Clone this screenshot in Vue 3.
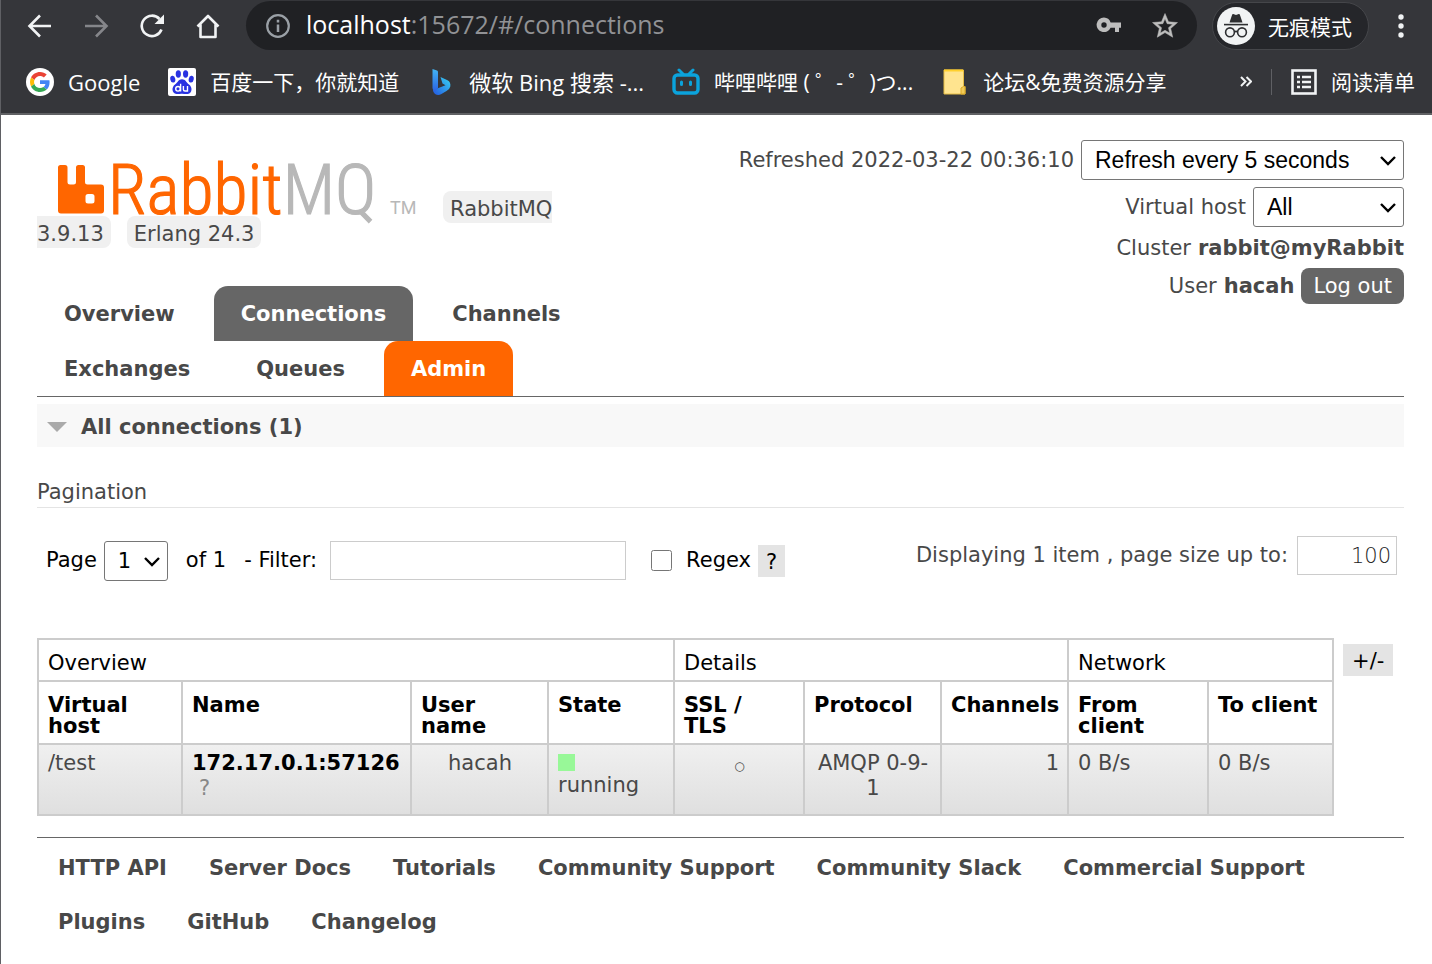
<script setup>
import { ref } from 'vue'

const refresh = ref('Refresh every 5 seconds')
const vhost = ref('All')
const page = ref('1')
const filter = ref('')
const regex = ref(false)
const pageSize = ref('100')

const tabs = [
  { name: 'Overview' },
  { name: 'Connections', state: 'selected' },
  { name: 'Channels' },
  { name: 'Exchanges' },
  { name: 'Queues' },
  { name: 'Admin', state: 'hot' }
]
const columns = [144, 229, 137, 126, 130, 137, 127, 140, 125]
const links = [
  'HTTP API', 'Server Docs', 'Tutorials', 'Community Support', 'Community Slack',
  'Commercial Support', 'Plugins', 'GitHub', 'Changelog'
]
</script>

<template>
  <div class="window">
    <div class="browser">
      <div class="toolbar">
        <button class="tool" aria-label="Back">
          <svg width="28" height="28" viewBox="0 0 28 28"><path d="M25 14H4M14 3.500L3.500 14L14 24.500" fill="none" stroke="#f1f3f4" stroke-width="2.600" /></svg>
        </button>
        <button class="tool" aria-label="Forward">
          <svg width="28" height="28" viewBox="0 0 28 28"><path d="M3 14H24M14 3.500L24.500 14L14 24.500" fill="none" stroke="#85868a" stroke-width="2.600" /></svg>
        </button>
        <button class="tool" aria-label="Reload">
          <svg width="28" height="28" viewBox="0 0 28 28"><path d="M23.500 17.500A10.200 10.200 0 1 1 21.500 7" fill="none" stroke="#f1f3f4" stroke-width="2.600" /><path d="M26 2.500V12H16.500Z" fill="#f1f3f4" /></svg>
        </button>
        <button class="tool" aria-label="Home">
          <svg width="28" height="28" viewBox="0 0 28 28"><path d="M3.500 14.500L14 4L24.500 14.500M6.500 12.500V25H21.500V12.500" fill="none" stroke="#f1f3f4" stroke-width="2.600" stroke-linejoin="round" /></svg>
        </button>
        <div class="omnibox">
          <svg width="26" height="26" viewBox="0 0 26 26"><circle cx="13" cy="13" r="10.800" fill="none" stroke="#9aa0a6" stroke-width="2.200" /><path d="M13 11.500V19M13 6.800V9.400" stroke="#9aa0a6" stroke-width="2.500" /></svg>
          <div class="url" role="textbox" aria-label="Address"><span class="host">localhost</span>:15672/#/connections</div>
          <svg class="key" width="26" height="26" viewBox="0 0 26 26"><path fill="#bdbdbd" fill-rule="evenodd" d="M8 4.500a7.300 7.300 0 1 0 6.600 10.200H19V19h4v-4.300h2V9.400H14.600A7.300 7.300 0 0 0 8 4.500ZM8 9.300a2.700 2.700 0 1 1 0 5.400a2.700 2.700 0 0 1 0-5.400Z" /></svg>
          <svg class="star" width="30" height="30" viewBox="0 0 24 24"><path fill="#bdbdbd" stroke="#bdbdbd" stroke-width=".4" d="M22 9.240l-7.190-.62L12 2 9.190 8.630 2 9.240l5.460 4.730L5.820 21 12 17.270 18.180 21l-1.630-7.030L22 9.240zM12 15.400l-3.760 2.270 1-4.280-3.320-2.880 4.380-.38L12 6.100l1.710 4.040 4.380.38-3.320 2.880 1 4.280L12 15.400z" /></svg>
        </div>
        <button class="incognito">
          <svg width="38" height="38" viewBox="0 0 38 38"><circle cx="19" cy="19" r="19" fill="#f1f3f4" /><path fill="#2d2e31" d="M12.500 15.500L15.200 7.600Q15.500 6.900 16.300 7.100L19 7.900L21.700 7.100Q22.500 6.900 22.800 7.600L25.500 15.500Z" /><path d="M7 17.600H31" stroke="#2d2e31" stroke-width="1.600" /><g fill="none" stroke="#2d2e31" stroke-width="1.600"><circle cx="13" cy="25.300" r="4.400" /><circle cx="25" cy="25.300" r="4.400" /><path d="M17.300 25Q19 23.600 20.700 25" /></g></svg>
          <span>无痕模式</span>
        </button>
        <button class="menu" aria-label="Menu">
          <svg width="8" height="26" viewBox="0 0 8 26"><g fill="#f1f3f4"><circle cx="4" cy="4" r="2.700" /><circle cx="4" cy="13" r="2.700" /><circle cx="4" cy="22" r="2.700" /></g></svg>
        </button>
      </div>
      <nav class="bookmarks" aria-label="Bookmarks">
        <a href="#" class="latin">
          <svg width="28" height="28" viewBox="0 0 28 28"><circle cx="14" cy="14" r="14" fill="#fff" /><g transform="translate(4 4) scale(.417)"><path fill="#ea4335" d="M24 9.500c3.540 0 6.710 1.220 9.210 3.600l6.850-6.850C35.900 2.380 30.470 0 24 0 14.620 0 6.510 5.380 2.560 13.220l7.980 6.190C12.430 13.720 17.740 9.500 24 9.500z" /><path fill="#4285f4" d="M46.980 24.550c0-1.570-.15-3.090-.38-4.550H24v9.020h12.940c-.58 2.960-2.260 5.480-4.780 7.180l7.730 6c4.510-4.180 7.090-10.360 7.090-17.650z" /><path fill="#fbbc05" d="M10.530 28.590c-.48-1.450-.76-2.990-.76-4.590s.27-3.140.76-4.590l-7.980-6.190C.92 16.460 0 20.120 0 24c0 3.880.92 7.540 2.560 10.780l7.970-6.190z" /><path fill="#34a853" d="M24 48c6.480 0 11.930-2.130 15.890-5.810l-7.730-6c-2.150 1.450-4.920 2.300-8.160 2.300-6.260 0-11.570-4.220-13.470-9.910l-7.980 6.190C6.510 42.620 14.620 48 24 48z" /></g></svg>
          Google
        </a>
        <a href="#">
          <svg width="28" height="28" viewBox="0 0 28 28"><rect width="28" height="28" rx="2" fill="#fff" /><g fill="#2932e1"><ellipse cx="10.300" cy="6" rx="2.600" ry="3.700" /><ellipse cx="17.600" cy="6" rx="2.600" ry="3.700" /><ellipse cx="4.800" cy="11.200" rx="2.500" ry="3.400" transform="rotate(-12 4.800 11.200)" /><ellipse cx="23.200" cy="11.200" rx="2.500" ry="3.400" transform="rotate(12 23.200 11.200)" /><path d="M14 11.300C10.500 11.300 9.800 14.500 7 16.500C3.500 19 3.400 25 8.500 26C11 26.400 12 25.700 14 25.700S17.500 26.400 19.800 26C24.600 25 24.500 19 21 16.500C18.200 14.500 17.500 11.300 14 11.300Z" /></g><g fill="none" stroke="#fff" stroke-width="1.400"><circle cx="10" cy="20.800" r="2.300" /><path d="M12.600 15.800V23.500M15.400 18V21.500Q15.400 23 17 23H19.500V18" /></g></svg>
          百度一下，你就知道
        </a>
        <a href="#" class="latin">
          <svg width="28" height="28" viewBox="0 0 28 28"><defs><linearGradient id="bingStem" x1="0" y1="0" x2="0" y2="1"><stop offset="0" stop-color="#42b5f5" /><stop offset="1" stop-color="#2b62e3" /></linearGradient><linearGradient id="bingBowl" x1="0" y1="1" x2="1" y2="0"><stop offset="0" stop-color="#2457e0" /><stop offset="1" stop-color="#38d4f2" /></linearGradient></defs><path fill="url(#bingBowl)" d="M13.500 9L20.500 12.300Q24 14.200 23.300 18.500Q22.800 21 19.500 23L14 26.300Q11 27.800 8 26Q6 24.800 6 22L11.500 20L18.500 17.200L15.500 15.500Z" /><path fill="url(#bingStem)" d="M5.500 1L10 2.600Q11 3 11 4.200V20L8.500 23.500Q5.500 22.500 5.500 19.500Z" /></svg>
          微软 Bing 搜索 -...
        </a>
        <a href="#">
          <svg width="28" height="28" viewBox="0 0 28 28"><g fill="none" stroke="#0ba3dc" stroke-linecap="round"><rect x="2" y="7" width="24" height="18" rx="3.500" stroke-width="3.400" /><path d="M7 2L11 6M21 2L17 6" stroke-width="3" /><path d="M9.500 14V16.500M18.500 14V16.500" stroke-width="3" /></g></svg>
          哔哩哔哩 ( ゜- ゜)つ...
        </a>
        <a href="#">
          <svg width="28" height="28" viewBox="0 0 28 28"><path d="M3 2H22.500V18.500H24V26H3Z" fill="#ffe48f" stroke="#e6bd45" /><path d="M3 2.500H22" stroke="#ffd02e" stroke-width="2" /><path d="M20 26V20L22.500 18.500H24V26Z" fill="#f2cb57" stroke="#dba926" /></svg>
          论坛&amp;免费资源分享
        </a>
        <button class="more" aria-label="More bookmarks">
          <svg width="12" height="12" viewBox="0 0 12 12"><path d="M1 1L5.500 5.500L1 10M6.500 1L11 5.500L6.500 10" fill="none" stroke="#f1f3f4" stroke-width="2" /></svg>
        </button>
        <button class="reading">
          <svg width="26" height="26" viewBox="0 0 26 26"><rect x="1.500" y="1.500" width="23" height="23" fill="none" stroke="#f1f3f4" stroke-width="2.600" /><path d="M6 8H9M6 13H9M6 18H9M11 8H20M11 13H20M11 18H20" stroke="#f1f3f4" stroke-width="2.600" /></svg>
          阅读清单
        </button>
      </nav>
    </div>

    <main class="page">
      <header class="top">
        <div class="brand">
          <div class="versions">
            <svg class="logo" width="385" height="56" viewBox="0 0 385 56" role="img" aria-label="RabbitMQ">
              <path fill="#f60" fill-rule="evenodd" d="M2.500 5H7Q9.500 5 9.500 7.500V22Q9.500 24.500 12 24.500H15.500Q18 24.500 18 22V7.500Q18 5 20.500 5H24.500Q27 5 27 7.500V22Q27 24.500 29.500 24.500H43Q46 24.500 46 27.500V50.500Q46 53.500 43 53.500H3Q0 53.500 0 50.500V7.500Q0 5 2.500 5ZM30 34Q27.500 34 27.500 36.500V41Q27.500 43.500 30 43.500H34Q36.500 43.500 36.500 41V36.500Q36.500 34 34 34Z" />
              <text class="word" x="50" y="54"><tspan class="rabbit">Rabbit</tspan><tspan class="mq">MQ</tspan></text>
              <text class="tm" x="332" y="54">TM</text>
            </svg>
            <span class="version">RabbitMQ 3.9.13</span>
            <span class="version erlang">Erlang 24.3</span>
          </div>
          <nav class="tabs">
            <a v-for="t in tabs" :key="t.name" href="#" :class="t.state">{{ t.name }}</a>
          </nav>
        </div>
        <div class="status">
          <div class="line">
            <label for="refresh">Refreshed 2022-03-22 00:36:10</label>
            <span class="drop wide">
              <select id="refresh" v-model="refresh"><option>Refresh every 5 seconds</option></select>
              <svg width="18" height="12" viewBox="0 0 18 12"><path d="M2 2L9 9L16 2" /></svg>
            </span>
          </div>
          <div class="line">
            <label for="vhost">Virtual host</label>
            <span class="drop mid">
              <select id="vhost" v-model="vhost"><option>All</option></select>
              <svg width="18" height="12" viewBox="0 0 18 12"><path d="M2 2L9 9L16 2" /></svg>
            </span>
          </div>
          <div class="line cluster">Cluster <b>rabbit@myRabbit</b></div>
          <div class="line">User <b>hacah</b> <button class="logout">Log out</button></div>
        </div>
      </header>

      <h2><svg width="20" height="12" viewBox="0 0 20 12"><path d="M0 0H20L10 10Z" fill="#aaa" /></svg>All connections (1)</h2>

      <h3>Pagination</h3>
      <div class="pager">
        <label for="page">Page</label>
        <span class="drop small">
          <select id="page" v-model="page"><option>1</option></select>
          <svg width="18" height="12" viewBox="0 0 18 12"><path d="M2 2L9 9L16 2" /></svg>
        </span>
        <span class="of">of 1</span>
        <label for="filter">- Filter:</label>
        <input id="filter" v-model="filter" class="filter" type="text">
        <input id="regex" v-model="regex" class="check" type="checkbox">
        <label for="regex">Regex</label>
        <button class="help">?</button>
        <div class="size">
          <label for="size">Displaying 1 item , page size up to:</label>
          <input id="size" v-model="pageSize" type="text">
        </div>
      </div>

      <div class="grid">
        <table>
          <colgroup><col v-for="(w, i) in columns" :key="i" :style="{ width: w + 'px' }"></colgroup>
          <thead>
            <tr class="groups">
              <th colspan="4">Overview</th>
              <th colspan="3">Details</th>
              <th colspan="2">Network</th>
            </tr>
            <tr>
              <th>Virtual host</th>
              <th>Name</th>
              <th>User name</th>
              <th>State</th>
              <th>SSL /<br>TLS</th>
              <th>Protocol</th>
              <th>Channels</th>
              <th>From client</th>
              <th>To client</th>
            </tr>
          </thead>
          <tbody>
            <tr>
              <td>/test</td>
              <td><a href="#" class="conn">172.17.0.1:57126</a><br><span class="hint">?</span></td>
              <td class="center">hacah</td>
              <td><span class="dot"></span><span class="state">running</span></td>
              <td class="center"><span class="circle">○</span></td>
              <td class="center">AMQP 0-9-<wbr>1</td>
              <td class="right">1</td>
              <td>0 B/s</td>
              <td>0 B/s</td>
            </tr>
          </tbody>
        </table>
        <button class="help">+/-</button>
      </div>

      <footer>
        <a v-for="l in links" :key="l" href="#">{{ l }}</a>
      </footer>
    </main>
  </div>
</template>

<style>
body {
  background: #fff;
}
</style>

<style scoped>
.window {
  box-sizing: border-box;
  min-height: 100vh;
  border-left: 1px solid #5f6064;
  background: #fff;
  color: #484848;
  font: 21px/25px "DejaVu Sans", sans-serif;
}
button {
  border: 0;
  padding: 0;
  background: none;
  color: inherit;
  font: inherit;
}
a {
  color: inherit;
  text-decoration: none;
}
svg {
  flex: none;
}

/* browser frame */
.browser {
  border-bottom: 2px solid #606164;
  background: #35363a;
  color: #fff;
  font-family: "Open Sans", "Noto Sans CJK SC", sans-serif;
}
.toolbar {
  display: flex;
  align-items: center;
  height: 51px;
  padding-left: 11px;
}
.tool {
  display: flex;
  justify-content: center;
  width: 56px;
}
.omnibox {
  display: flex;
  flex: 1;
  align-items: center;
  box-sizing: border-box;
  height: 49px;
  margin-left: 10px;
  padding: 0 17px 0 19px;
  border-radius: 25px;
  background: #202124;
}
.url {
  flex: 1;
  padding: 0 0 4px 15px;
  color: #919295;
  font-size: 25px;
  line-height: 34px;
  white-space: nowrap;
}
.host {
  color: #fff;
}
.key {
  margin-right: 28px;
}
.incognito {
  display: flex;
  gap: 13px;
  align-items: center;
  box-sizing: border-box;
  height: 48px;
  margin-left: 15px;
  padding: 0 16px 0 4px;
  border: 1px solid #45464a;
  border-radius: 24px;
  background: #25262a;
  font-size: 21px;
  white-space: nowrap;
}
.incognito span {
  padding-top: 3px;
}
.menu {
  display: flex;
  justify-content: center;
  width: 63px;
}
.bookmarks {
  display: flex;
  align-items: center;
  gap: 28px;
  height: 62px;
  padding: 0 17px 0 25px;
  font-size: 21px;
  white-space: nowrap;
}
.bookmarks a {
  display: flex;
  gap: 14px;
  align-items: center;
}
.bookmarks .latin {
  font-size: 22px;
}
.more {
  display: flex;
  margin-left: auto;
}
.reading {
  display: flex;
  gap: 14px;
  align-items: center;
  margin-left: -9px;
  padding-left: 19px;
  border-left: 1px solid #5f6064;
}

/* management page */
.page {
  padding: 25px 28px 29px 36px;
}
.top {
  display: flex;
  justify-content: space-between;
  border-bottom: 1px solid #666;
}
.brand {
  flex: 0 1 570px;
}
.versions {
  padding: 20px 10px 0 0;
}
.logo {
  margin-left: 21px;
  overflow: visible;
  vertical-align: baseline;
}
.word {
  font: 300 70px "Roboto Condensed", Roboto, sans-serif;
  stroke-width: 1.2;
}
.rabbit {
  fill: #f60;
  stroke: #f60;
}
.mq {
  fill: #b8b8b8;
  stroke: #b8b8b8;
}
.tm {
  fill: #b8b8b8;
  font: 18px Roboto, sans-serif;
}
.version {
  padding: 6px 7px 2px;
  border-radius: 8px;
  background: #f0f0f0;
}
.erlang {
  margin-left: 16px;
}
.tabs {
  display: flex;
  flex-wrap: wrap;
  column-gap: 12px;
  margin-top: 39px;
}
.tabs a {
  padding: 16px 27px 14px;
  border-radius: 14px 14px 0 0;
  font-weight: bold;
}
.tabs .selected {
  background: #666;
  color: #fff;
}
.tabs .hot {
  background: #f60;
  color: #fff;
}
.status {
  display: flex;
  flex-direction: column;
  align-items: flex-end;
  gap: 7px;
}
.line {
  display: flex;
  gap: 7px;
  align-items: center;
  white-space: nowrap;
}
.cluster {
  padding-top: 2px;
}
.logout {
  padding: 6px 12px 5px;
  border-radius: 8px;
  background: #666;
  color: #fff;
}
.drop {
  display: flex;
  position: relative;
}
.drop select {
  box-sizing: border-box;
  width: 100%;
  height: 40px;
  padding: 0 13px;
  border: 1px solid #767676;
  border-radius: 3px;
  appearance: none;
  background: #fff;
  color: #000;
  font: 23px "Liberation Sans", sans-serif;
}
.drop svg {
  position: absolute;
  top: 15px;
  right: 7px;
  fill: none;
  stroke: #000;
  stroke-width: 2.4;
  pointer-events: none;
}
.wide {
  width: 323px;
}
.mid {
  width: 151px;
}
.small {
  width: 64px;
}
h2 {
  display: flex;
  gap: 14px;
  align-items: center;
  margin: 7px 0 0;
  padding: 11px 10px 7px;
  background: #f8f8f8;
  font-size: 21px;
  line-height: 25px;
}
h3 {
  margin: 33px 0 0;
  padding-bottom: 2px;
  border-bottom: 1px solid #e4e4e4;
  font-size: 21px;
  font-weight: normal;
  line-height: 25px;
}
.pager {
  display: flex;
  gap: 7px;
  align-items: center;
  margin-top: 28px;
  padding: 0 7px 0 9px;
  color: #000;
  white-space: nowrap;
}
.pager .drop select {
  font: 21px "DejaVu Sans", sans-serif;
}
.of {
  padding: 0 11px;
}
.pager input[type="text"] {
  box-sizing: border-box;
  height: 39px;
  padding: 0 5px;
  border: 1px solid #ccc;
}
.pager .filter {
  width: 296px;
  margin-left: 6px;
}
.check {
  width: 21px;
  height: 21px;
  margin: 0 7px 0 18px;
}
.help {
  padding: 5px 8px 2px;
  background: #e4e4e4;
  color: #000;
}
.size {
  display: flex;
  gap: 9px;
  align-items: center;
  margin-left: auto;
  padding-bottom: 10px;
  color: #484848;
}
.size input {
  width: 100px;
  color: #222;
  font: 200 21px "DejaVu Sans Light", "DejaVu Sans", sans-serif;
  text-align: right;
}
.grid {
  display: flex;
  gap: 9px;
  align-items: flex-start;
  margin-top: 53px;
  padding-right: 11px;
}
.grid .help {
  margin-top: 6px;
  padding: 5px 9px 2px;
}
table {
  flex: 1;
  width: 100%;
  table-layout: fixed;
  border-collapse: collapse;
}
th,
td {
  border: 2px solid #ccc;
  text-align: left;
  vertical-align: top;
}
th {
  padding: 13px 8px 6px 9px;
  color: #000;
  line-height: 21px;
}
.groups th {
  font-weight: normal;
}
td {
  padding: 6px 8px 13px 9px;
}
tbody tr {
  background: linear-gradient(#f0f0f0, #dfdfdf);
}
.center {
  text-align: center;
}
.right {
  text-align: right;
}
.conn {
  color: #000;
  font-weight: bold;
}
.hint {
  padding-left: 7px;
  color: #888;
}
.dot {
  display: block;
  width: 17px;
  height: 17px;
  margin: 3px 0 2px;
  background: #98f898;
}
.state {
  display: block;
}
.circle {
  font-size: 12px;
}
footer {
  display: flex;
  flex-wrap: wrap;
  row-gap: 29px;
  margin-top: 21px;
  padding-top: 18px;
  border-top: 1px solid #666;
  font-weight: bold;
}
footer a {
  padding: 0 21px;
}
</style>
